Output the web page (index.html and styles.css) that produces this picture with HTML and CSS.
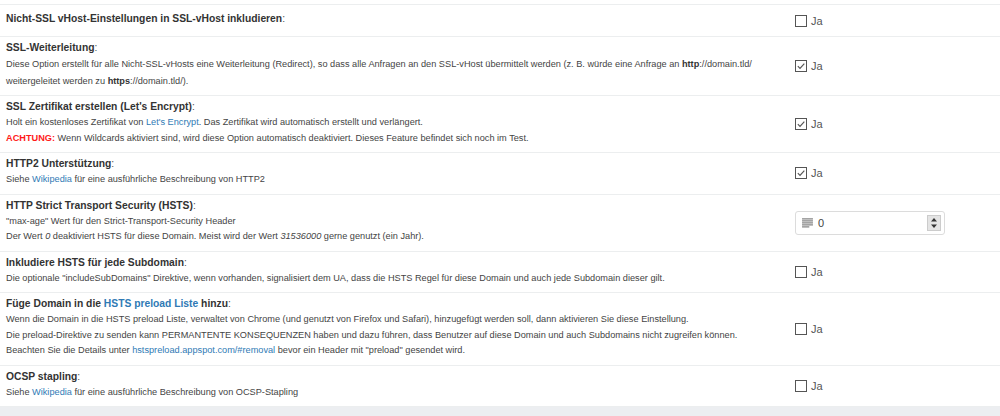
FILE: index.html
```html
<!DOCTYPE html>
<html>
<head>
<title>SSL Einstellungen</title>
<link rel="stylesheet" href="styles.css">
</head>
<body>

<div class="settings">

  <div class="setting-row">
    <div class="setting-text">
      <div class="setting-title"><b>Nicht-SSL vHost-Einstellungen in SSL-vHost inkludieren</b>:</div>
    </div>
    <div class="setting-control">
      <label class="check"><span class="box"></span>Ja</label>
    </div>
  </div>

  <div class="setting-row">
    <div class="setting-text">
      <div class="setting-title"><b>SSL-Weiterleitung</b>:</div>
      <p class="setting-desc wrap">Diese Option erstellt für alle Nicht-SSL-vHosts eine Weiterleitung (Redirect), so dass alle Anfragen an den SSL-vHost übermittelt werden (z. B. würde eine Anfrage an <b>http</b>://domain.tld/ weitergeleitet werden zu <b>https</b>://domain.tld/).</p>
    </div>
    <div class="setting-control">
      <label class="check"><span class="box checked"><svg viewBox="0 0 12 12"><path d="M2.2 6.2 L4.8 8.8 L10 3.2"/></svg></span>Ja</label>
    </div>
  </div>

  <div class="setting-row">
    <div class="setting-text">
      <div class="setting-title"><b>SSL Zertifikat erstellen (Let's Encrypt)</b>:</div>
      <p class="setting-desc">Holt ein kostenloses Zertifikat von <a href="#">Let's Encrypt</a>. Das Zertifikat wird automatisch erstellt und verlängert.</p>
      <p class="setting-desc"><span class="warn">ACHTUNG:</span> Wenn Wildcards aktiviert sind, wird diese Option automatisch deaktiviert. Dieses Feature befindet sich noch im Test.</p>
    </div>
    <div class="setting-control">
      <label class="check"><span class="box checked"><svg viewBox="0 0 12 12"><path d="M2.2 6.2 L4.8 8.8 L10 3.2"/></svg></span>Ja</label>
    </div>
  </div>

  <div class="setting-row">
    <div class="setting-text">
      <div class="setting-title"><b>HTTP2 Unterstützung</b>:</div>
      <p class="setting-desc">Siehe <a href="#">Wikipedia</a> für eine ausführliche Beschreibung von HTTP2</p>
    </div>
    <div class="setting-control">
      <label class="check"><span class="box checked"><svg viewBox="0 0 12 12"><path d="M2.2 6.2 L4.8 8.8 L10 3.2"/></svg></span>Ja</label>
    </div>
  </div>

  <div class="setting-row">
    <div class="setting-text">
      <div class="setting-title"><b>HTTP Strict Transport Security (HSTS)</b>:</div>
      <p class="setting-desc">"max-age" Wert für den Strict-Transport-Security Header</p>
      <p class="setting-desc">Der Wert <i>0</i> deaktiviert HSTS für diese Domain. Meist wird der Wert <i>31536000</i> gerne genutzt (ein Jahr).</p>
    </div>
    <div class="setting-control">
      <div class="number-input">
        <svg class="num-icon" viewBox="0 0 12 11"><path d="M0 1h12M0 3.2h12M0 5.4h12M0 7.6h12M0 9.8h8"/></svg>
        <span class="num-value">0</span>
        <span class="spinner">
          <svg viewBox="0 0 12 14"><path d="M3 5.5 L6 2 L9 5.5Z M3 8.5 L6 12 L9 8.5Z"/></svg>
        </span>
      </div>
    </div>
  </div>

  <div class="setting-row">
    <div class="setting-text">
      <div class="setting-title"><b>Inkludiere HSTS für jede Subdomain</b>:</div>
      <p class="setting-desc">Die optionale "includeSubDomains" Direktive, wenn vorhanden, signalisiert dem UA, dass die HSTS Regel für diese Domain und auch jede Subdomain dieser gilt.</p>
    </div>
    <div class="setting-control">
      <label class="check"><span class="box"></span>Ja</label>
    </div>
  </div>

  <div class="setting-row">
    <div class="setting-text">
      <div class="setting-title"><b>Füge Domain in die <a href="#">HSTS preload Liste</a> hinzu</b>:</div>
      <p class="setting-desc">Wenn die Domain in die HSTS preload Liste, verwaltet von Chrome (und genutzt von Firefox und Safari), hinzugefügt werden soll, dann aktivieren Sie diese Einstellung.</p>
      <p class="setting-desc">Die preload-Direktive zu senden kann PERMANTENTE KONSEQUENZEN haben und dazu führen, dass Benutzer auf diese Domain und auch Subdomains nicht zugreifen können.</p>
      <p class="setting-desc">Beachten Sie die Details unter <a href="#">hstspreload.appspot.com/#removal</a> bevor ein Header mit "preload" gesendet wird.</p>
    </div>
    <div class="setting-control">
      <label class="check"><span class="box"></span>Ja</label>
    </div>
  </div>

  <div class="setting-row">
    <div class="setting-text">
      <div class="setting-title"><b>OCSP stapling</b>:</div>
      <p class="setting-desc">Siehe <a href="#">Wikipedia</a> für eine ausführliche Beschreibung von OCSP-Stapling</p>
    </div>
    <div class="setting-control">
      <label class="check"><span class="box"></span>Ja</label>
    </div>
  </div>

</div>

<div class="page-footer"></div>

</body>
</html>
```

FILE: styles.css
```css
body {
  margin: 0;
  background: #fff;
  font-family: "Liberation Sans", Arial, sans-serif;
  font-size: 9px;
  color: #444;
}

.settings {
  padding-top: 4px;
}

.setting-row {
  display: grid;
  grid-template-columns: 1fr 205px;
  align-items: center;
  min-height: 31px;
  border-top: 1px solid #eceeef;
}

.setting-text {
  padding: 3px 0 6px 6px;
}

.setting-title {
  font-size: 10.3px;
  line-height: 16px;
  color: #555;
}

.setting-title b {
  color: #333;
}

.setting-desc {
  margin: 0;
  font-size: 9.2px;
  line-height: 15.5px;
  color: #444;
}

.setting-desc.wrap {
  line-height: 16.5px;
  padding-right: 20px;
}

.setting-desc b {
  color: #333;
}

a {
  color: #2f7ab5;
  text-decoration: none;
}

.warn {
  color: #ff1a1a;
  font-weight: bold;
}

/* checkbox */
.check {
  display: flex;
  align-items: center;
  gap: 4px;
  font-size: 11px;
  line-height: 14px;
  color: #555;
}

.box {
  width: 10px;
  height: 10px;
  border: 1px solid #555;
  background: #fff;
  display: inline-block;
}

.box svg {
  width: 10px;
  height: 10px;
  display: block;
}

.box svg path {
  fill: none;
  stroke: #555;
  stroke-width: 1.4;
}

/* number input */
.number-input {
  width: 139px;
  height: 22px;
  border: 1px solid #dcdcdc;
  border-radius: 3px;
  display: flex;
  align-items: center;
  padding: 0 3px 0 6px;
  box-sizing: content-box;
}

.num-icon {
  width: 11px;
  height: 10px;
}

.num-icon path {
  stroke: #666;
  stroke-width: 1.1;
}

.num-value {
  margin-left: 5px;
  font-size: 11px;
  line-height: 14px;
  color: #444;
  flex: 1;
}

.spinner {
  width: 12px;
  height: 14px;
  background: #e4e4e4;
  border: 1px solid #ccc;
}

.spinner svg {
  display: block;
  width: 12px;
  height: 14px;
}

.spinner svg path {
  fill: #333;
}

.page-footer {
  height: 10px;
  background: #eceef1;
  border-top: 1px solid #eceeef;
}
```
